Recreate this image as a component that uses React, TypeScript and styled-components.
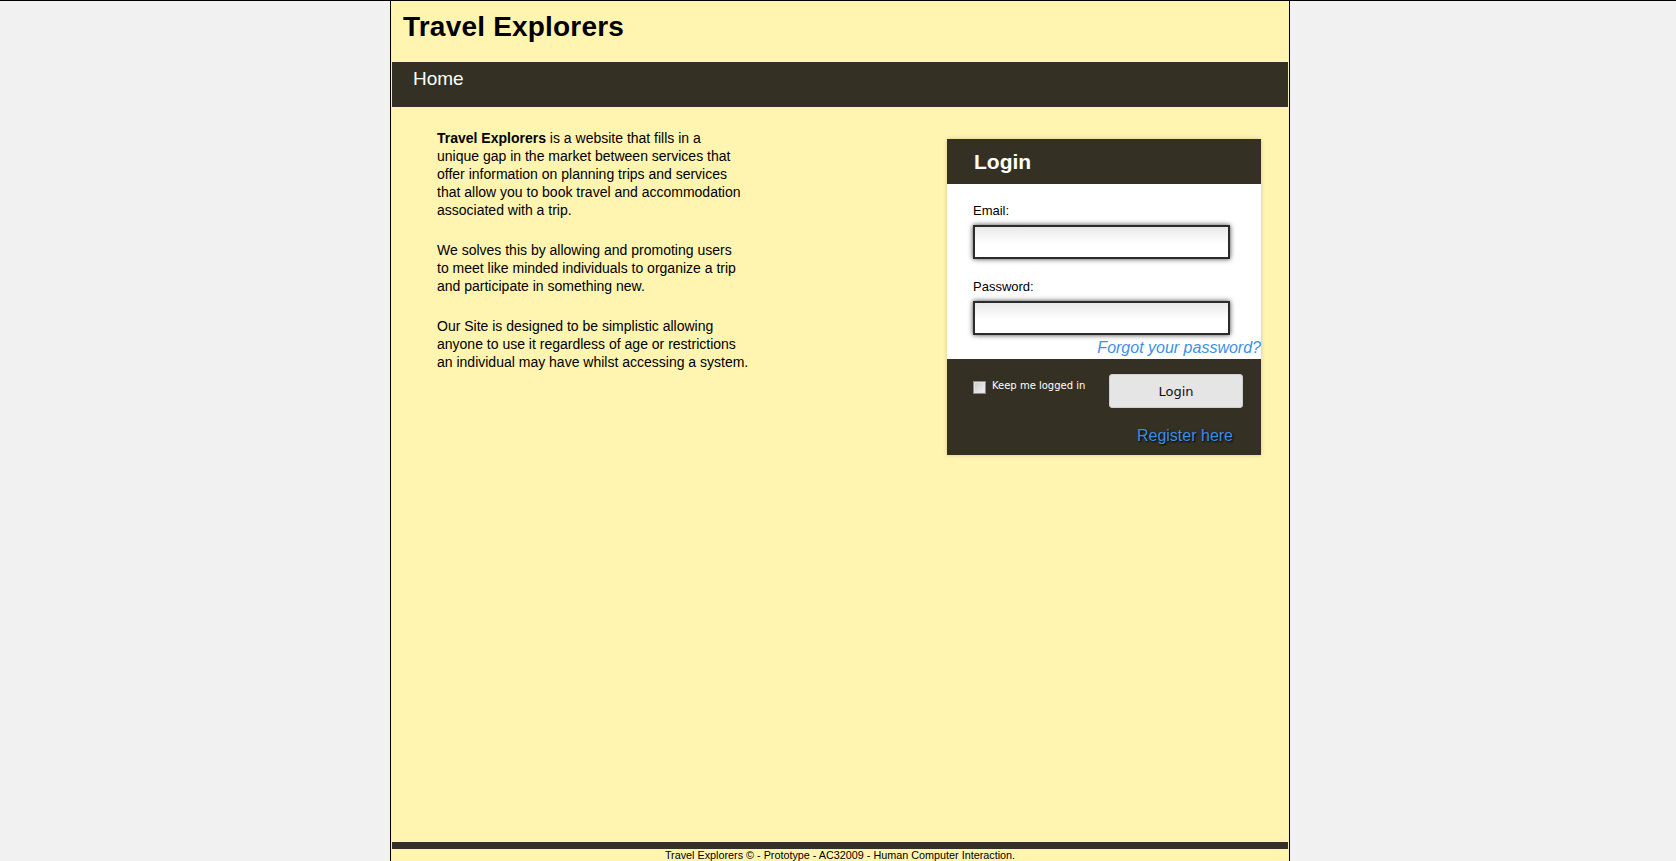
import React from 'react'
import styled, { createGlobalStyle } from 'styled-components'

const GlobalStyle = createGlobalStyle`
  html, body {
    margin: 0;
    padding: 0;
  }
  body {
    background: #f1f1f1;
    border-top: 1px solid #000;
    font-family: "Liberation Sans", Arial, sans-serif;
    color: #000;
  }
`

const Page = styled.div`
  width: 898px;
  margin-left: calc(50% - 448px);
  height: 860px;
  display: flex;
  flex-direction: column;
  background: #fff4b0;
  border-left: 1px solid #000;
  border-right: 1px solid #000;
  overflow: hidden;
`

const Header = styled.header`
  height: 61px;
  box-sizing: border-box;
  padding: 10px 12px 0;
`

const Title = styled.h1`
  margin: 0;
  font-size: 28px;
  line-height: 32px;
  font-weight: bold;
  letter-spacing: 0.2px;
`

const Nav = styled.nav`
  height: 45px;
  box-sizing: border-box;
  margin: 0 1px;
  padding: 6px 21px 0;
  background: #343124;
`

const NavLink = styled.a`
  color: #fff;
  font-size: 19px;
  line-height: 22px;
  text-decoration: none;
`

const Main = styled.main`
  flex: 1;
  display: flex;
  justify-content: space-between;
  align-items: flex-start;
`

const Intro = styled.section`
  width: 330px;
  margin-left: 46px;
  padding-top: 22px;
  font-size: 14px;
  line-height: 18px;
  white-space: nowrap;
`

const Para = styled.p`
  margin: 0 0 22px;
`

const LoginBox = styled.form`
  width: 314px;
  margin: 32px 28px 0 0;
  box-shadow: 0 0 4px rgba(0, 0, 0, 0.18);
`

const LoginHead = styled.h2`
  margin: 0;
  height: 45px;
  box-sizing: border-box;
  padding: 11px 27px 0;
  background: #343124;
  color: #fff;
  font-size: 21px;
  line-height: 24px;
  font-weight: bold;
`

const Fields = styled.div`
  background: #fff;
  height: 175px;
  box-sizing: border-box;
  padding: 19px 0 0 26px;
`

const Label = styled.label<{ $gap?: number }>`
  display: block;
  font-size: 13px;
  line-height: 15px;
  margin-top: ${p => p.$gap ?? 0}px;
`

const Input = styled.input`
  display: block;
  box-sizing: border-box;
  width: 257px;
  height: 34px;
  margin-top: 7px;
  border: 2px solid #2b2b2b;
  background: linear-gradient(to bottom, #e9e9e9 0%, #ffffff 55%, #ffffff 100%);
  box-shadow: 0 0 5px rgba(0, 0, 0, 0.75);
  outline: none;
`

const Forgot = styled.a`
  display: block;
  margin-top: 4px;
  text-align: right;
  font-size: 16px;
  line-height: 18px;
  font-style: italic;
  color: #3f8fe6;
  text-decoration: none;
`

const Actions = styled.div`
  background: #343124;
  height: 96px;
  box-sizing: border-box;
  padding: 15px 18px 0 26px;
`

const ActionRow = styled.div`
  display: flex;
  justify-content: space-between;
  align-items: flex-start;
`

const Remember = styled.label`
  display: flex;
  align-items: center;
  margin-top: 5px;
  color: #fff;
  font-family: "DejaVu Sans", Verdana, sans-serif;
  font-size: 10px;
  line-height: 12px;
`

const Check = styled.input`
  appearance: none;
  width: 13px;
  height: 13px;
  margin: 0 6px 0 0;
  box-sizing: border-box;
  border: 1px solid #8a8a8a;
  background: linear-gradient(135deg, #c8c8c8, #f4f4f4);
  box-shadow: inset 0 0 0 1px #e4e4e4;
  position: relative;
  top: 2px;
`

const Button = styled.button`
  width: 134px;
  height: 34px;
  border: 1px solid #cfcfcf;
  border-radius: 3px;
  background: #e5e5e5;
  color: #111;
  font-family: "DejaVu Sans", Verdana, sans-serif;
  font-size: 13px;
  cursor: pointer;
`

const Register = styled.a`
  display: block;
  margin: 19px 10px 0 0;
  text-align: right;
  font-size: 16px;
  line-height: 18px;
  color: #3a8de8;
  text-decoration: none;
  text-shadow: 1px 1px 2px #000;
`

const FooterBar = styled.div`
  height: 7px;
  margin: 0 1px;
  background: #343124;
`

const FooterText = styled.footer`
  height: 12px;
  text-align: center;
  font-size: 10.8px;
  line-height: 12px;
`

export default function App() {
  return (
    <>
      <GlobalStyle />
      <Page>
        <Header>
          <Title>Travel Explorers</Title>
        </Header>
        <Nav>
          <NavLink href="#">Home</NavLink>
        </Nav>
        <Main>
          <Intro>
            <Para>
              <b>Travel Explorers</b> is a website that fills in a<br />
              unique gap in the market between services that<br />
              offer information on planning trips and services<br />
              that allow you to book travel and accommodation<br />
              associated with a trip.
            </Para>
            <Para>
              We solves this by allowing and promoting users<br />
              to meet like minded individuals to organize a trip<br />
              and participate in something new.
            </Para>
            <Para>
              Our Site is designed to be simplistic allowing<br />
              anyone to use it regardless of age or restrictions<br />
              an individual may have whilst accessing a system.
            </Para>
          </Intro>
          <LoginBox onSubmit={e => e.preventDefault()}>
            <LoginHead>Login</LoginHead>
            <Fields>
              <Label htmlFor="email">Email:</Label>
              <Input id="email" type="text" />
              <Label htmlFor="password" $gap={20}>Password:</Label>
              <Input id="password" type="password" />
              <Forgot href="#">Forgot your password?</Forgot>
            </Fields>
            <Actions>
              <ActionRow>
                <Remember>
                  <Check type="checkbox" />
                  Keep me logged in
                </Remember>
                <Button type="submit">Login</Button>
              </ActionRow>
              <Register href="#">Register here</Register>
            </Actions>
          </LoginBox>
        </Main>
        <FooterBar />
        <FooterText>Travel Explorers © - Prototype - AC32009 - Human Computer Interaction.</FooterText>
      </Page>
    </>
  )
}
